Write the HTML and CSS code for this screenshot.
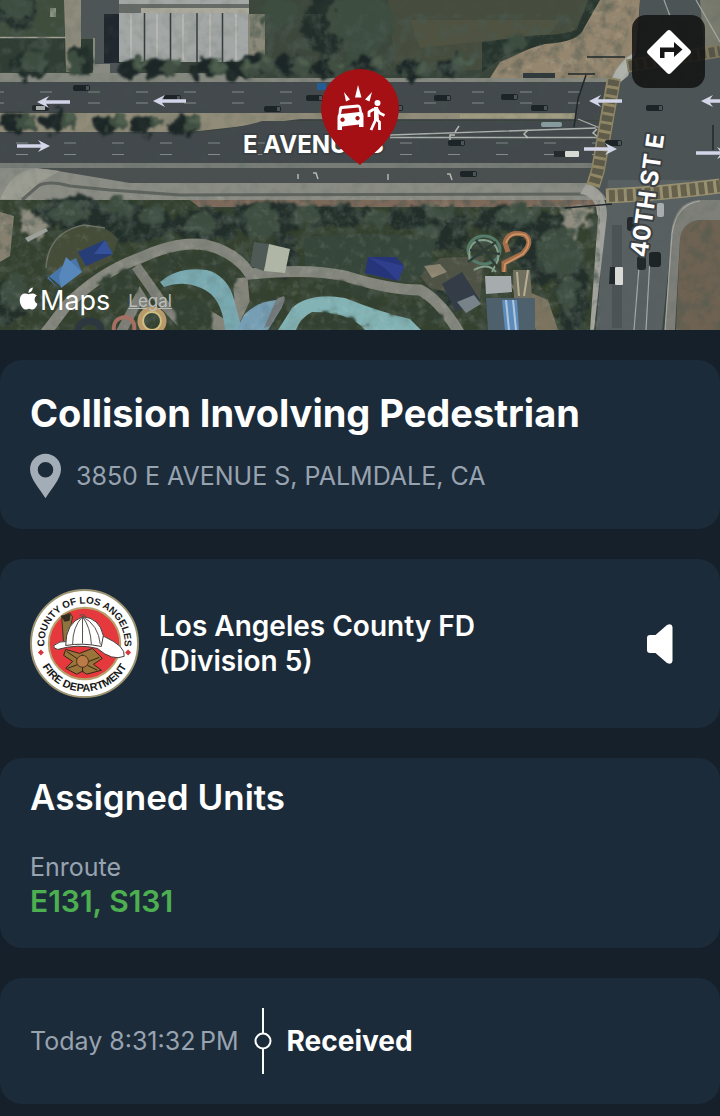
FILE: index.html
```html
<!DOCTYPE html>
<html lang="en">
<head>
<meta charset="UTF-8">
<meta name="viewport" content="width=device-width, initial-scale=1.0">
<title>Collision Involving Pedestrian</title>
<link rel="stylesheet" href="styles.css">
</head>
<body>

<div class="map">
    <svg class="map-art" viewBox="0 0 720 330" role="img" aria-label="Satellite map of E Avenue S and 40th St E">
        <defs>
            <filter id="rough" x="-5%" y="-5%" width="110%" height="110%">
                <feTurbulence type="fractalNoise" baseFrequency="0.09" numOctaves="3" seed="4" result="n"/>
                <feDisplacementMap in="SourceGraphic" in2="n" scale="18" xChannelSelector="R" yChannelSelector="G" result="d"/>
                <feGaussianBlur in="d" stdDeviation="0.8"/>
            </filter>
            <filter id="grain" x="0" y="0" width="100%" height="100%">
                <feTurbulence type="fractalNoise" baseFrequency="0.08" numOctaves="4" seed="9"/>
                <feColorMatrix values="0 0 0 0 0.07  0 0 0 0 0.1  0 0 0 0 0.08  2.2 0 0 0 -0.95"/>
                <feComposite in2="SourceGraphic" operator="in"/>
            </filter>
            <filter id="speck" x="0" y="0" width="100%" height="100%">
                <feTurbulence type="fractalNoise" baseFrequency="0.12" numOctaves="3" seed="21"/>
                <feColorMatrix values="0 0 0 0 0.7  0 0 0 0 0.72  0 0 0 0 0.6  0 2.4 0 0 -1.3"/>
                <feComposite in2="SourceGraphic" operator="in"/>
            </filter>
            <g id="arrow">
                <path d="M0 0 12-6 9-1.700H33V1.700H9L12 6z" fill="#d3d5e8"/>
            </g>
            <g id="car">
                <rect width="17" height="6" rx="2" fill="#1d2427"/>
                <rect x="13" y="1" width="3" height="4" fill="#4b5558"/>
            </g>
            <g id="bush">
                <ellipse cx="-6" cy="2" rx="15" ry="10" fill="#1c2827"/>
                <ellipse cx="5" cy="0" rx="9" ry="8" fill="#405043"/>
                <ellipse cx="7" cy="-2" rx="5" ry="4" fill="#4f6050"/>
            </g>
        </defs>

        <!-- ground -->
        <rect width="720" height="330" fill="#39443a"/>
        <path d="M0 0H64V38H0z" fill="#3e4d3c"/>
        <path d="M0 37H95V72H0z" fill="#2f3d34"/>
        <path d="M0 37.500H94V72" fill="none" stroke="#a3a294" stroke-width="1.500"/>
        <path d="M64 0H81V72H66z" fill="#8e8c7c"/>
        <path d="M81 0H120V76H95V38H81z" fill="#4f5557"/>
        <path d="M104 14H120V63H104z" fill="#20272e"/>
        <path d="M94 64H110V76H92z" fill="#898b82"/>
        <path d="M50 8H56V17H50z" fill="#8b9384"/>
        <path d="M250 0H400V75H250z" fill="#3d473c"/>
        <path d="M388 0H590L575 30 530 42 500 60 480 70H395z" fill="#464d3e"/>
        <path d="M410 20H560L550 34 420 48z" fill="#505341"/>
        <path d="M588 0H640L636 55 612 78H490L500 62 540 44 578 34z" fill="#95866f"/>
        <path d="M588 0 577 30Q560 36 538 35L482 42V72L505 56 545 44Q580 42 584 28L600 0z" fill="#27352e"/>

        <!-- storage units -->
        <rect x="119" y="0" width="130" height="62" fill="#a3a7a5"/>
        <rect x="119" y="4" width="130" height="9" fill="#666b67"/>
        <rect x="141" y="8" width="108" height="5" fill="#aaa99b"/>
        <path d="M144.500 13V62M170.500 13V62M197 13V62M222.500 13V62" stroke="#353c3f" stroke-width="1.500"/>
        <path d="M131 14V60M157 14V60M183 14V60M210 14V60M236 14V60" stroke="#b4b7b3" stroke-width="2"/>
        <path d="M248 14H265V56H248z" fill="#8b8979"/>

        <!-- E Avenue S -->
        <path d="M0 73H232L245 78H618V84H0z" fill="#85887f"/>
        <path d="M0 82H640V120H0z" fill="#43494c"/>
        <path d="M0 113H244L575 113V119H300L244 126 190 132H0z" fill="#918c79"/>
        <path d="M0 132H190Q235 130 262 121H640V166H0z" fill="#42484b"/>
        <path d="M0 163H594V168H0z" fill="#777c77"/>
        <path d="M0 168H600V184H0z" fill="#4a4f50"/>
        <path d="M0 168H32L52 170 130 183H600L610 200H0z" fill="#8b8d85"/>
        <path d="M0 199Q12 170 36 168L60 171 40 182 22 200z" fill="#9b9c92"/>
        <path d="M22 200 38 186Q48 180 70 186L110 190 180 195 600 194" fill="none" stroke="#5f645f" stroke-width="3"/>
        <path d="M190 200H600V207H190z" fill="#7d695a"/>
        <g stroke="#848b8c" stroke-width="1" stroke-dasharray="12 36">
            <path d="M-8 92H620M-8 103H620M16 143H620M16 154.500H620"/>
        </g>
        <path d="M390 135 596 128M390 137.500H600M578 119 600 128" fill="none" stroke="#aeb3ae" stroke-width="1.300"/>
        <path d="M528 130 524 134 528 138M597 129 593 133 598 137M298 179V174M318 179 316 173H313M388 180V174M452 180 450 174H447M455 135H450V140M455 132 459 126" fill="none" stroke="#b8bcb5" stroke-width="1.500"/>
        <path d="M460 114H572V118H460z" fill="#a19d82"/>

        <!-- 40th St E -->
        <path d="M640 0H720V214L684 218 672 235 662 330H596L608 215Q612 196 590 184L612 78Q635 68 638 50z" fill="#4d5456"/>
        <path d="M700 0H720V50H704z" fill="#7b7c70"/>
        <path d="M608 180H720V214L684 218 672 235 662 330H596z" fill="#596062"/>
        <path d="M586 184Q606 188 607 215L594 330H585L597 218Q598 196 580 194z" fill="#a0a19a"/>
        <path d="M612 78Q620 60 635 52L628 76 618 84z" fill="#b0b2ac"/>
        <path d="M676 330 680 240Q682 222 700 220H720V330z" fill="#6e6252"/>
        <path d="M665 330 671 234Q674 202 698 200H720V220H700Q682 222 680 240L675 330z" fill="#7d7f78"/>
        <path d="M665 330 672 234Q676 204 700 201M634 330 640 255M646 330 650 258M696 0 720 42M664 0 670 16" fill="none" stroke="#a7aaa6" stroke-width="1.200"/>
        <path d="M617 225V328" stroke="#444b4e" stroke-width="10" opacity=".6"/>

        <!-- crosswalks -->
        <g fill="none">
            <path d="M614 78 598 170 593 186" stroke="#928866" stroke-width="14"/>
            <path d="M614 80 598 170 594 184" stroke="#5e5b4a" stroke-width="11" stroke-dasharray="6 3"/>
            <path d="M606 196Q660 194 720 186" stroke="#9a9272" stroke-width="15"/>
            <path d="M609 196Q660 194 720 186" stroke="#67614c" stroke-width="12" stroke-dasharray="6 3"/>
            <path d="M627 66 720 51" stroke="#817a5f" stroke-width="13"/>
            <path d="M629 66 720 51" stroke="#575647" stroke-width="10" stroke-dasharray="6 3"/>
        </g>

        <!-- park ground -->
        <path d="M0 200H190L200 208H590L598 216 590 330H0z" fill="#35412f"/>
        <path d="M0 212 14 216 10 256 0 262z" fill="#85806f"/>

        <!-- vegetation -->
        <g filter="url(#rough)">
            <g fill="#202d29">
                <ellipse cx="28" cy="65" rx="20" ry="13"/>
                <ellipse cx="82" cy="60" rx="14" ry="14"/>
                <ellipse cx="18" cy="10" rx="22" ry="18"/>
                <ellipse cx="325" cy="26" rx="24" ry="30"/>
                <ellipse cx="40" cy="222" rx="20" ry="12"/>
                <ellipse cx="75" cy="212" rx="34" ry="17"/>
                <ellipse cx="130" cy="222" rx="44" ry="20"/>
                <ellipse cx="205" cy="225" rx="36" ry="16"/>
                <ellipse cx="265" cy="219" rx="36" ry="18"/>
                <ellipse cx="340" cy="217" rx="44" ry="11"/>
                <ellipse cx="425" cy="219" rx="46" ry="12"/>
                <ellipse cx="445" cy="236" rx="24" ry="14"/>
                <ellipse cx="510" cy="219" rx="36" ry="15"/>
                <ellipse cx="548" cy="248" rx="36" ry="34"/>
                <ellipse cx="572" cy="290" rx="16" ry="42"/>
                <ellipse cx="286" cy="258" rx="12" ry="22"/>
                <ellipse cx="10" cy="300" rx="18" ry="24"/>
                <ellipse cx="452" cy="286" rx="16" ry="18"/>
            </g>
            <g fill="#3c4e41">
                <ellipse cx="35" cy="62" rx="14" ry="10"/>
                <ellipse cx="18" cy="6" rx="16" ry="12"/>
                <ellipse cx="74" cy="63" rx="9" ry="9"/>
                <ellipse cx="362" cy="22" rx="34" ry="28"/>
                <ellipse cx="360" cy="56" rx="14" ry="12"/>
                <ellipse cx="280" cy="12" rx="18" ry="13"/>
                <ellipse cx="516" cy="44" rx="12" ry="9"/>
                <ellipse cx="68" cy="212" rx="22" ry="10"/>
                <ellipse cx="118" cy="207" rx="16" ry="10"/>
                <ellipse cx="152" cy="216" rx="12" ry="12"/>
                <ellipse cx="200" cy="224" rx="16" ry="10"/>
                <ellipse cx="262" cy="220" rx="16" ry="18"/>
                <ellipse cx="306" cy="215" rx="12" ry="10"/>
                <ellipse cx="376" cy="218" rx="12" ry="8"/>
                <ellipse cx="442" cy="213" rx="14" ry="9"/>
                <ellipse cx="428" cy="232" rx="11" ry="9"/>
                <ellipse cx="520" cy="214" rx="22" ry="10"/>
                <ellipse cx="560" cy="250" rx="24" ry="24"/>
                <ellipse cx="568" cy="296" rx="9" ry="22"/>
                <ellipse cx="14" cy="290" rx="13" ry="16"/>
            </g>
            <use href="#bush" x="260" y="62"/><use href="#bush" x="296" y="64"/>
            <use href="#bush" x="332" y="66"/><use href="#bush" x="374" y="64"/>
            <use href="#bush" x="418" y="68"/><use href="#bush" x="456" y="64"/>
            <use href="#bush" x="137" y="66"/><use href="#bush" x="165" y="66"/>
            <use href="#bush" x="211" y="66"/><use href="#bush" x="244" y="68"/>
            <use href="#bush" x="22" y="121"/><use href="#bush" x="62" y="120"/>
            <use href="#bush" x="112" y="122"/><use href="#bush" x="150" y="122"/>
            <use href="#bush" x="188" y="123"/>
        </g>
        <g filter="url(#rough)" fill="#8f8d7f">
            <path d="M20 206 38 216 48 226 40 240 22 232zM556 208 596 206 588 224 574 236 562 222z"/>
        </g>
        <path d="M0 0H64V72H0zM250 14H580L480 78H250zM0 200H600V330H0z" filter="url(#grain)" opacity=".8"/>
        <path d="M676 330 680 240 700 220H720V330zM588 0H640L612 78H490L540 44z" filter="url(#grain)" opacity=".5"/>

        <!-- lawns, paths and pools -->
        <path d="M46 268Q48 232 84 226 108 224 118 240L110 262 70 282 48 276z" fill="#454d39"/>
        <path d="M304 238Q350 230 436 238L432 262 415 284 350 272 305 268z" fill="#37463a"/>
        <g fill="none">
            <path d="M44 335 66 306Q100 272 140 258 178 240 206 245 236 252 250 274 310 268 345 276 390 290 420 290 440 300 460 334" stroke="#85877e" stroke-width="11"/>
            <path d="M136 266 160 300 192 334M120 334 140 296 150 312" stroke="#7d7f77" stroke-width="10"/>
            <path d="M240 278 242 300 228 330 205 316" stroke="#85857b" stroke-width="15"/>
            <path d="M46 268Q48 232 84 225L105 228" stroke="#6b7063" stroke-width="1.500"/>
        </g>
        <path d="M160 282Q178 266 207 270 229 276 235 303L242 330H225Q222 296 201 288 183 280 164 287z" fill="#79a9b1"/>
        <path d="M244 315Q256 302 276 300L282 307 268 330H236z" fill="#769fb6"/>
        <path d="M276 300Q290 290 282 307L270 326 264 328z" fill="#747a7c"/>
        <path d="M278 330 292 308Q310 292 345 298 380 312 410 319L421 330H365Q350 312 312 312 300 318 296 330z" fill="#83b3b5"/>
        <g filter="url(#rough)" fill="#333f31">
            <path d="M150 262Q190 246 222 258L238 290 214 270 180 265 158 278z"/>
            <path d="M300 330Q310 313 330 313 352 314 366 330z"/>
            <path d="M175 330 174 302Q184 294 202 300 216 310 217 330z"/>
            <path d="M304 284 344 283 372 292 386 302 376 306 350 294 306 291zM390 304Q424 298 442 320L434 326 390 312z"/>
            <path d="M105 279 132 272 140 290 120 302 92 302z"/>
        </g>
        <path d="M420 276 440 258 484 256 480 300 430 288z" fill="#4f5346"/>
        <path d="M424 266 440 264 447 272 432 278z" fill="#938974"/>
        <path d="M510 284 548 300 558 330H536z" fill="#7c745f"/>
        <path d="M0 196H600V330H0z" filter="url(#speck)" opacity=".18"/>
        <path d="M500 70 540 44 588 20 590 0H630L616 74z" filter="url(#speck)" opacity=".25"/>
        <rect width="720" height="330" filter="url(#grain)" opacity=".2"/>

        <!-- roofs, canopies and slides -->
        <path d="M46 274 58 288 47 278 66 263 76 258 82 272 62 287z" fill="#4776aa"/>
        <path d="M66 257 82 272 61 288 59 276z" fill="#5787bb"/>
        <path d="M78 252 105 240 113 254 86 266z" fill="#273d78"/>
        <path d="M105 240 94 254 113 254z" fill="#35519a"/>
        <path d="M368 257 396 257 404 266 398 281 365 273z" fill="#26347a"/>
        <path d="M368 257 386 269 398 281 404 266z" fill="#303f8d"/>
        <path d="M25 238 46 228 48 231 28 242z" fill="#9da19b"/>
        <path d="M254 242 269 244 264 271 250 266z" fill="#4f5a57"/>
        <path d="M269 244 290 249 285 273 264 271z" fill="#afb6a6"/>
        <g fill="none">
            <ellipse cx="484" cy="250" rx="16" ry="14" stroke="#557c6a" stroke-width="3"/>
            <path d="M470 262Q466 240 484 240 500 242 498 260L492 272M474 270Q488 262 496 272" stroke="#84a08c" stroke-width="2"/>
            <path d="M468 262 496 242M476 240 498 268M470 250 500 254" stroke="#2f3d38" stroke-width="2.500"/>
            <path d="M504 272 504 263 522 254Q534 242 525 235 508 230 505 243L508 252" stroke="#a66d49" stroke-width="5"/>
            <path d="M504 272 505 264 523 254Q533 242 525 235 510 231 506 243" stroke="#cf9768" stroke-width="1.500"/>
            <circle cx="152" cy="321" r="12" stroke="#b99a6b" stroke-width="5"/>
            <circle cx="152" cy="321" r="9" stroke="#d2c184" stroke-width="2"/>
            <path d="M114 331Q112 318 126 317 136 320 134 331" stroke="#a56f63" stroke-width="4"/>
            <path d="M78 331Q79 321 90 321 101 322 101 331" stroke="#2d3740" stroke-width="7"/>
        </g>
        <path d="M485 276H511L512 292 486 294z" fill="#a6acad"/>
        <path d="M513 270H530L532 298H514z" fill="#716f5f"/>
        <path d="M517 272 519 296M528 270 524 296" stroke="#b5ae91" stroke-width="2"/>
        <path d="M486 298H535V330H488z" fill="#4f606d"/>
        <path d="M502 300H517L519 330H505z" fill="#5c8bbc"/>
        <path d="M506 300 509 330M513 300 516 330" stroke="#b0c7db" stroke-width="2"/>
        <path d="M442 284 462 272 480 300 456 312z" fill="#343d47"/>
        <path d="M457 302 474 295 481 304 466 313z" fill="#778389"/>

        <!-- traffic -->
        <use href="#car" x="73" y="85"/><use href="#car" x="164" y="95"/>
        <use href="#car" x="264" y="106"/><use href="#car" x="306" y="95"/>
        <use href="#car" x="434" y="95"/><use href="#car" x="386" y="105"/>
        <use href="#car" x="448" y="140"/><use href="#car" x="501" y="94"/>
        <use href="#car" x="531" y="105"/><use href="#car" x="646" y="105"/>
        <use href="#car" x="605" y="140"/><use href="#car" x="460" y="171"/>
        <rect x="32" y="105" width="17" height="6" rx="2" fill="#23292b"/>
        <rect x="36" y="106" width="9" height="4" fill="#a6abac"/>
        <rect x="523" y="73" width="32" height="5" fill="#303a3d"/>
        <rect x="541" y="122" width="21" height="5" rx="2" fill="#869b9c"/>
        <rect x="554" y="151" width="12" height="6" fill="#252b2d"/>
        <rect x="565" y="151" width="14" height="6" rx="1" fill="#d9d9d3"/>
        <rect x="317" y="83" width="9" height="7" fill="#235d91"/>
        <path d="M610 267H616V284H609z" fill="#20282c"/>
        <rect x="615" y="267" width="8" height="18" rx="1" fill="#d9d9d5"/>
        <rect x="649" y="252" width="12" height="15" rx="3" fill="#1d2426"/>
        <rect x="637" y="256" width="9" height="14" rx="3" fill="#23292b"/>
        <rect x="627" y="217" width="8" height="14" rx="3" fill="#23292b"/>
        <rect x="657" y="203" width="7" height="14" rx="2" fill="#a9adb0"/>
        <path d="M574 127 578 99 586 75M568 74H595M565 208 612 204M587 57H625M713 125V150" fill="none" stroke="#20282a" stroke-width="1.500"/>

        <!-- lane direction -->
        <use href="#arrow" x="37" y="102"/>
        <use href="#arrow" x="153" y="101"/>
        <use href="#arrow" x="589" y="101"/>
        <use href="#arrow" x="701" y="101"/>
        <use href="#arrow" transform="translate(50 146) scale(-1 1)"/>
        <use href="#arrow" transform="translate(617 149) scale(-1 1)"/>
        <use href="#arrow" transform="translate(729 153) scale(-1 1)"/>

        <!-- labels -->
        <text class="road-label" x="243" y="153">E AVENUE S</text>
        <text class="road-label" transform="translate(647 258) rotate(-82)">40TH ST E</text>

        <!-- incident pin -->
        <path d="M360 165C352 158 321 138 321 108A39 39 0 0 1 399 108C399 138 368 158 360 165z" fill="#a41014"/>
        <g fill="#fff">
            <path d="M358 85 361.500 97.500H355zM344 92 350 99.500 346 101.500zM372 92 369.500 101.500 365 99.500z"/>
            <path fill-rule="evenodd" d="M341 106 358 104.500Q360 104.500 361 107L362 112Q363.500 113 363.500 116V127H359V124.500L342 126.500V130H337.500V118Q337.500 115 338.500 114L339 108.500Q339.500 106 341 106zM342 109 341 114 359.500 112 358.500 107.500zM342.500 117.500A2.200 2.200 0 1 0 342.600 117.500zM357.500 116A2.200 2.200 0 1 0 357.600 116z"/>
            <circle cx="377.500" cy="103" r="3"/>
        </g>
        <path d="M376 109 376 119 371 130M376 119 379.500 122V130M374 109 369 112V117M377 109 379.500 113 384.500 115.500" fill="none" stroke="#fff" stroke-width="2.800" stroke-linejoin="round"/>
        <path d="M374 107H378L379 120H374z" fill="#fff"/>
    </svg>

    <div class="map-credit">
        <svg class="apple" viewBox="0 0 18 22" aria-hidden="true"><path d="M9 6.500C6 5 1 5.500.700 12 .600 16 3.500 21 6 21 7.500 21 8 20.200 9.500 20.200S11.500 21 13 21C15.200 21 17 17.500 17.500 15.600 14 14 14 9.500 17 7.800 14.500 5 11.500 5.500 9 6.500zM9 5.200C8.800 2.800 10.700.500 13 .200 13.200 2.700 11.300 5 9 5.200z" fill="#fff"/></svg>
        <span class="maps-word">Maps</span>
        <a class="legal" href="#legal">Legal</a>
    </div>

    <button class="directions" type="button" aria-label="Directions">
        <svg viewBox="0 0 46 46" aria-hidden="true">
            <path d="M21 2Q23 0 25 2L44 21Q46 23 44 25L25 44Q23 46 21 44L2 25Q0 23 2 21z" fill="#fff"/>
            <path d="M14 29V18.500H28V13L36.500 20.500 28 28V23H18.500V29z" fill="#161616"/>
        </svg>
    </button>
</div>

<main class="cards">
    <section class="card incident">
        <h1>Collision Involving Pedestrian</h1>
        <p class="address">
            <svg viewBox="0 0 32 46" aria-hidden="true"><path fill-rule="evenodd" d="M16 0A16 16 0 0 1 32 16C32 26 22 36 16 46 10 36 0 26 0 16A16 16 0 0 1 16 0zM16 8.500A8 8 0 1 0 16 24.500 8 8 0 1 0 16 8.500z" fill="#a3adb8"/></svg>
            <span>3850 E AVENUE S, PALMDALE, CA</span>
        </p>
    </section>

    <section class="card agency">
        <svg class="seal" viewBox="0 0 110 110" role="img" aria-label="County of Los Angeles Fire Department">
            <defs>
                <path id="arcTop" d="M20 75.500A40.500 40.500 0 1 1 90 75.500"/>
                <path id="arcBottom" d="M6.500 55A48.500 48.500 0 0 0 103.500 55"/>
            </defs>
            <circle cx="55" cy="55" r="54" fill="#fff" stroke="#9d9472" stroke-width="2"/>
            <circle cx="55" cy="55" r="36" fill="#e5393d" stroke="#b8a06c" stroke-width="2"/>
            <text class="seal-text" text-anchor="middle"><textPath href="#arcTop" startOffset="50%">COUNTY OF LOS ANGELES</textPath></text>
            <text class="seal-text seal-bottom" text-anchor="middle"><textPath href="#arcBottom" startOffset="50%">FIRE DEPARTMENT</textPath></text>
            <path d="M11 61 14 64 11 67 8 64zM99 61 102 64 99 67 96 64z" fill="#d5363b"/>
            <!-- maltese cross -->
            <path d="M36 61 50 65 63 60 73 70 64 76 72 82 57 86 53 83 47 86 36 80 43 73 34 67z" fill="#9a7439" stroke="#33251a"/>
            <path d="M37 63 50 72M70 69 57 74M38 80 49 76M68 82 58 77M53 66V84" stroke="#33251a"/>
            <circle cx="53" cy="73" r="6" fill="#ba7b47" stroke="#4a331e"/>
            <!-- helmet -->
            <path d="M32 28 40 24 43 28 37 58 34 56z" fill="#8e743e" stroke="#403620"/>
            <path d="M31 27 41 25 40 32 35 33z" fill="#332b22"/>
            <path d="M24 57Q30 52 37 53L75 48Q97 58 95 68 83 73 68 60 48 55 28 61 23 60 24 57z" fill="#fff" stroke="#403a36"/>
            <path d="M36 57Q36 34 53 28 70 29 74 47L72 58Q53 54 36 57z" fill="#fff" stroke="#403a36"/>
            <path d="M53 28V55M53 28Q43 38 43 56M53 28Q61 38 62 56M53 28Q69 36 71 56M50 27Q54 24 57 29" fill="none" stroke="#56504b"/>
        </svg>
        <h2>Los Angeles County FD<br>(Division 5)</h2>
        <button class="speaker" type="button" aria-label="Play audio">
            <svg viewBox="0 0 28 42" aria-hidden="true"><path d="M4 12H9.500L21 2Q26 0 26.500 4V38Q26 42 21 40L9.500 30H4Q1 30 1 27V15Q1 12 4 12z" fill="#fff"/></svg>
        </button>
    </section>

    <section class="card units">
        <h2>Assigned Units</h2>
        <p class="status">Enroute</p>
        <p class="unit-list">E131, S131</p>
    </section>

    <section class="card timeline">
        <time>Today 8:31:32&#8201;PM</time>
        <svg class="marker" viewBox="0 0 18 66" aria-hidden="true">
            <path d="M9 0V25M9 41V66" stroke="#fff" stroke-width="2"/>
            <circle cx="9" cy="33" r="7.500" fill="none" stroke="#fff" stroke-width="2"/>
        </svg>
        <strong>Received</strong>
    </section>
</main>

</body>
</html>
```

FILE: styles.css
```css
* { box-sizing: border-box; }
body {
    margin: 0; background: #15202b; color: #fff;
    font-family: Inter, "Liberation Sans", sans-serif;
}
h1, h2, p { margin: 0; }
button { padding: 0; border: none; background: none; cursor: pointer; }
svg { display: block; }

/* map */
.map { position: relative; overflow: hidden; }
.map-art { width: 100%; height: auto; }
.road-label {
    font-size: 24px; font-weight: 700;
    fill: #fff; stroke: #3b4144; stroke-width: 4px;
    stroke-linejoin: round; paint-order: stroke;
}
.map-credit {
    position: absolute; left: 19px; bottom: 13px;
    display: flex; align-items: center; gap: 2px;
}
.apple { width: 19px; height: 24px; margin-bottom: 4px; }
.maps-word { font-size: 27px; line-height: 32px; }
.legal { margin-left: 16px; color: #b9bdb9; font-size: 17px; }
.directions {
    position: absolute; top: 15px; right: 15px;
    display: grid; place-items: center;
    width: 73px; height: 73px; border-radius: 14px;
    background: rgba(18, 18, 18, .86);
}
.directions svg { width: 46px; height: 46px; }

/* cards */
.cards { display: flex; flex-direction: column; gap: 30px; padding: 30px 0 14px; }
.card { padding: 30px; border-radius: 22px; background: #1c2b3a; }

.incident h1 { font-size: 38px; line-height: 46px; font-weight: 700; }
.address {
    display: flex; align-items: center; gap: 15px; margin-top: 17px;
    color: #98a3b0; font-size: 25px; line-height: 46px;
}
.address svg { width: 31px; height: 46px; }

.agency { display: flex; align-items: center; gap: 20px; }
.agency h2 { flex: 1; font-size: 28px; line-height: 35px; font-weight: 600; }
.seal { width: 109px; height: 109px; }
.seal-text { font: 700 10px "Liberation Sans", sans-serif; fill: #181818; }
.seal-text.seal-bottom { font-size: 11px; }
.speaker { margin-right: 16px; }
.speaker svg { width: 28px; height: 42px; }

.units { padding-top: 18px; }
.units h2 { font-size: 35px; line-height: 42px; font-weight: 600; }
.status { margin-top: 32px; color: #98a3b0; font-size: 25px; line-height: 34px; }
.unit-list { color: #4caf50; font-size: 30px; line-height: 34px; font-weight: 600; }

.timeline { display: flex; align-items: center; gap: 15px; }
.timeline time { color: #98a3b0; font-size: 25px; line-height: 34px; }
.timeline strong { font-size: 28px; line-height: 34px; font-weight: 700; }
.marker { width: 18px; height: 66px; }
```
